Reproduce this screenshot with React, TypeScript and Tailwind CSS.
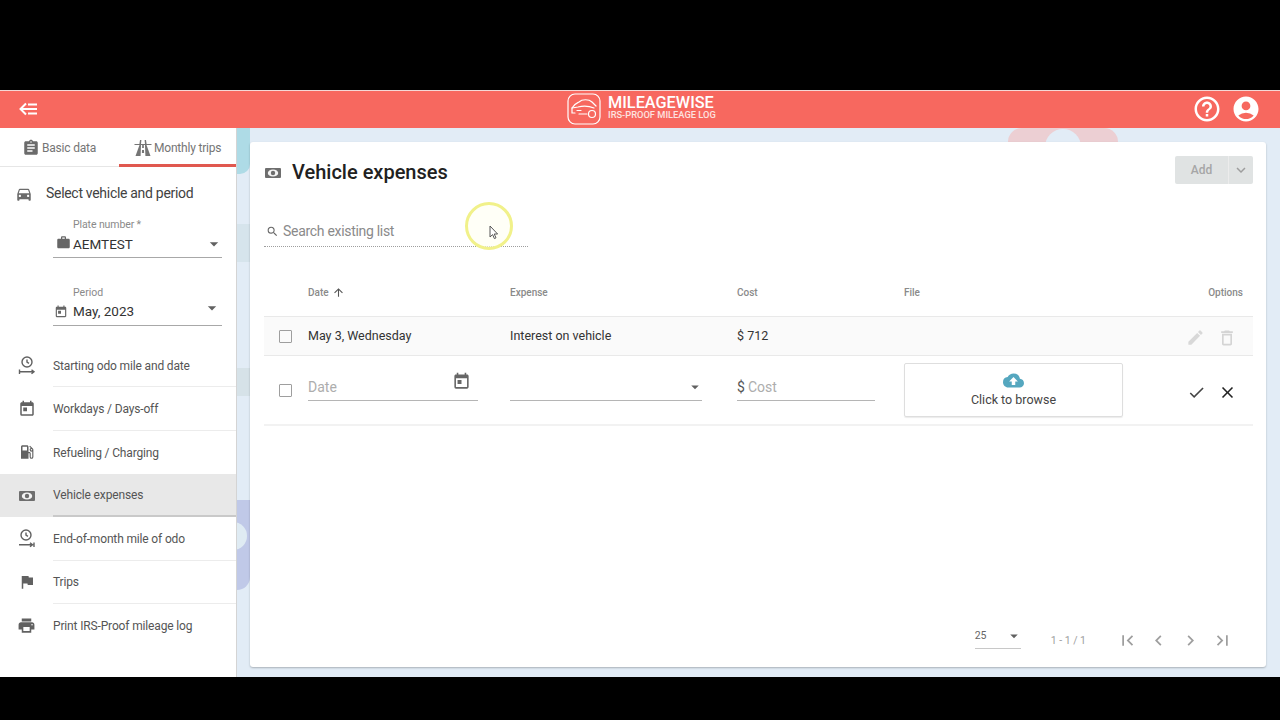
import React from "react";
import {
  MdAssignment, MdDirectionsCar, MdWork, MdToday, MdLocalGasStation, MdFlag, MdPrint,
  MdCloudUpload, MdCheck, MdClose, MdEdit, MdDeleteOutline, MdFirstPage, MdLastPage, MdChevronLeft, MdChevronRight,
  MdSearch, MdArrowUpward, MdHelpOutline, MdAccountCircle, MdArrowDropDown, MdKeyboardArrowDown,
} from "react-icons/md";

const Road = () => (
  <svg width="18" height="18" viewBox="0 0 18 18" fill="#757575">
    <path d="M5.5 6 L7 6 L6.6 17 L1.5 17 Z M11 6 L12.5 6 L16.5 17 L11.4 17 Z M8.2 6 L9.8 6 L9.9 9 L8.1 9 Z M8 11 L10 11 L10.1 14 L7.9 14 Z" />
    <path d="M0.5 5 L17.5 5 L17.5 6 L0.5 6 Z M6 1 L7.4 1 L7 5 L5.4 5 Z M10.6 1 L12 1 L12.6 5 L11 5 Z" />
  </svg>
);

const ClockStart = () => (
  <svg width="18" height="20" viewBox="0 0 18 20" fill="none" stroke="#616161" strokeWidth="1.4">
    <circle cx="9" cy="6" r="5" />
    <path d="M9 3.5 V6.2 L11 7.3" />
    <path d="M1.5 13.5 V18 M1.5 15.8 H16 M13.5 13.8 L16 15.8 L13.5 17.8" />
  </svg>
);

const ClockEnd = () => (
  <svg width="18" height="20" viewBox="0 0 18 20" fill="none" stroke="#616161" strokeWidth="1.4">
    <circle cx="8" cy="6" r="5" />
    <path d="M8 3.5 V6.2 L10 7.3" />
    <path d="M16 13.5 V18 M1 15.8 H14.5 M12 13.8 L14.5 15.8 L12 17.8" />
  </svg>
);

const Money = ({ className = "" }: { className?: string }) => (
  <svg className={className} width="16" height="12" viewBox="0 0 16 12">
    <rect x="0" y="1" width="16" height="10" rx="1" fill="#6e6e6e" />
    <ellipse cx="8" cy="6" rx="5.2" ry="3.6" fill="#f4f4f4" />
    <circle cx="8" cy="6" r="2.2" fill="#6e6e6e" />
  </svg>
);

const Logo = () => (
  <svg width="34" height="32" viewBox="0 0 34 32" fill="none" stroke="#fff" strokeWidth="1.2" strokeLinecap="round">
    <rect x="1" y="1" width="32" height="30" rx="7" />
    <path d="M5 15 C7 11 10 10 12 9 C15 6 22 6 25 9 L29 13" />
    <path d="M5 15 V20 H8 M5 15 L11 14 C15 13 22 13 27 15" />
    <path d="M10 17.5 H14 M12 21 H20" />
    <circle cx="25" cy="21" r="3.5" />
  </svg>
);

const navItems = [
  { icon: <ClockStart />, label: "Starting odo mile and date" },
  { icon: <MdToday size={18} color="#616161" />, label: "Workdays / Days-off" },
  { icon: <MdLocalGasStation size={18} color="#616161" />, label: "Refueling / Charging" },
  { icon: <Money />, label: "Vehicle expenses", active: true },
  { icon: <ClockEnd />, label: "End-of-month mile of odo" },
  { icon: <MdFlag size={18} color="#616161" />, label: "Trips" },
  { icon: <MdPrint size={19} color="#616161" />, label: "Print IRS-Proof mileage log" },
];

const Checkbox = () => <div className="h-[13px] w-[13px] rounded-[1px] border border-[#9e9e9e]" />;

const rowCols = "grid grid-cols-[44px_202px_227px_167px_1fr]";

export default function App() {
  return (
    <div className="flex h-[720px] w-[1280px] flex-col overflow-hidden bg-black font-['Roboto',sans-serif]">
      <div className="h-[90px] shrink-0" />
      <header className="relative flex h-[38px] shrink-0 items-center justify-between border-t border-[#f4d9d6] bg-[#f7685f] pb-[2px] pl-[19px] pr-[19px] text-white">
        <svg width="19" height="14" viewBox="0 0 19 14" fill="none" stroke="#fff" strokeWidth="2">
          <path d="M7 1.5 L1.5 7 L7 12.5 M2 7 H18 M9 2.5 H18 M9 11.5 H18" />
        </svg>
        <div className="absolute left-[567px] top-[-1px] flex h-[37px] items-center gap-[7px]">
          <Logo />
          <div className="mb-[2px] flex flex-col">
            <span className="text-[16.3px] font-medium leading-[14px]">MILEAGEWISE</span>
            <span className="text-[9.3px] font-medium leading-[10px] text-[#fde3e0]">IRS-PROOF MILEAGE LOG</span>
          </div>
        </div>
        <div className="flex items-center gap-[9px]">
          <MdHelpOutline size={30} />
          <MdAccountCircle size={30} />
        </div>
      </header>

      <div className="relative flex h-[549px] shrink-0 bg-[#e2ecf6]">
        <div className="absolute left-[237px] top-0 h-[46px] w-[13px] rounded-br-[10px] bg-[#aedbe6]" />
        <div className="absolute left-[237px] top-[96px] h-[38px] w-[13px] bg-[#d6e4ec]" />
        <div className="absolute left-[237px] top-[240px] h-[28px] w-[13px] bg-[#d6e2e8]" />
        <div className="absolute left-[237px] top-[372px] h-[90px] w-[13px] rounded-br-[14px] bg-[#c0c9e8]" />
        <div className="absolute left-[219px] top-[394px] h-[28px] w-[28px] rounded-full bg-[#dfebf3]" />
        <div className="absolute left-[1008px] top-0 h-[14px] w-[110px] rounded-t-[14px] bg-[#eccfd3]" />
        <div className="absolute left-[1045px] top-[1px] h-[40px] w-[36px] rounded-full bg-[#e2ecf6]" />

        <aside className="relative z-10 flex w-[237px] shrink-0 flex-col border-r border-[#d4d4d4] bg-white">
          <div className="flex h-[39px] shrink-0 border-b border-[#e6e6e6] text-[12px] tracking-[-0.2px] text-[#757575]">
            <div className="flex w-[119px] items-center gap-[2px] pl-[22px] pt-[2px]">
              <MdAssignment size={18} color="#6b6b6b" />
              <span>Basic data</span>
            </div>
            <div className="-mb-px flex flex-1 items-center gap-[2px] border-b-[3px] border-[#e0584f] pl-[15px] pt-[4px]">
              <Road />
              <span>Monthly trips</span>
            </div>
          </div>

          <div className="flex h-[52px] shrink-0 items-center gap-[13px] pl-[15px] pt-[1px] text-[14px] text-[#424242]">
            <MdDirectionsCar size={18} color="#6b6b6b" />
            <span className="tracking-[-0.3px]">Select vehicle and period</span>
          </div>

          <div className="ml-[53px] mr-[14px] h-[67px] shrink-0">
            <div className="pl-[20px] text-[10.5px] leading-[12px] tracking-[-0.1px] text-[#8a8a8a]">Plate number *</div>
            <div className="flex h-[27px] items-center border-b border-[#a8a8a8]">
              <MdWork size={15} color="#666" className="-mt-[3px] ml-[3px] mr-[2px]" />
              <span className="text-[13.5px] text-[#333]">AEMTEST</span>
              <MdArrowDropDown size={20} color="#616161" className="-mr-[2px] ml-auto" />
            </div>
          </div>

          <div className="ml-[53px] mr-[14px] h-[58px] shrink-0 pt-[1px]">
            <div className="pl-[20px] text-[10.5px] leading-[12px] text-[#8a8a8a]">Period</div>
            <div className="flex h-[27px] items-center border-b border-[#a8a8a8] pb-[1px]">
              <MdToday size={14} color="#666" className="ml-[1px] mr-[5px]" />
              <span className="text-[13.5px] text-[#333]">May, 2023</span>
              <MdArrowDropDown size={20} color="#616161" className="-mt-[8px] ml-auto" />
            </div>
          </div>

          <nav className="flex flex-col">
            {navItems.map((it) => (
              <div key={it.label} className={`flex h-[43.33px] items-stretch ${it.active ? "bg-[#e8e8e8]" : ""}`}>
                <div className="flex w-[53px] shrink-0 items-center justify-center">{it.icon}</div>
                <div
                  className={`flex flex-1 items-center pt-[1px] text-[12px] tracking-[-0.15px] text-[#555] ${
                    it.active ? "border-b-2 border-[#c9c9c9]" : it.label.startsWith("Refueling") || it.label.startsWith("Print") ? "" : "border-b border-[#ececec]"
                  }`}
                >
                  {it.label}
                </div>
              </div>
            ))}
          </nav>
        </aside>

        <main className="relative z-10 mb-[10px] ml-[13px] mr-[14px] mt-[14px] flex flex-1 flex-col rounded-[3px] bg-white pl-[14px] pr-[13px] shadow-[0_1px_2px_rgba(0,0,0,0.25)]">
          <div className="flex h-[49px] shrink-0 items-start pt-[13px]">
            <div className="flex h-[34px] items-center gap-[11px] pl-[1px]">
              <Money className="mt-[2px]" />
              <h1 className="text-[20px] font-medium text-[#212121]">Vehicle expenses</h1>
            </div>
            <div className="ml-auto mt-[1px] flex h-[28px] w-[78px] overflow-hidden rounded-[2px] bg-[#e0e3e3] text-[12px] text-[#a6a6a6]">
              <div className="flex w-[53px] items-center justify-center font-medium">Add</div>
              <div className="flex flex-1 items-center justify-center border-l border-[#ececec]">
                <MdKeyboardArrowDown size={18} color="#9e9e9e" />
              </div>
            </div>
          </div>

          <div className="flex h-[56px] w-[264px] shrink-0 items-center gap-[4px] border-b border-dotted border-[#9e9e9e] pl-[2px] pt-[25px] text-[14px] text-[#8a8a8a]">
            <MdSearch size={13} color="#666" />
            <span className="tracking-[-0.3px]">Search existing list</span>
          </div>

          <div className={`${rowCols} mt-[30px] h-[39px] shrink-0 items-center pb-[9px] text-[10px] font-medium text-[#8a8a8a]`}>
            <div />
            <div className="flex items-center gap-[3px]">
              Date <MdArrowUpward size={13} color="#555" />
            </div>
            <div>Expense</div>
            <div>Cost</div>
            <div className="flex justify-between pr-[10px]">
              <span>File</span>
              <span>Options</span>
            </div>
          </div>

          <div className={`${rowCols} h-[40px] shrink-0 items-center border-y border-[#e9e9e9] bg-[#fafafa] text-[12.5px] text-[#333]`}>
            <div className="flex justify-center pr-[1px] pt-[1px]"><Checkbox /></div>
            <div>May 3, Wednesday</div>
            <div>Interest on vehicle</div>
            <div>$ 712</div>
            <div className="flex justify-end gap-[13px] pr-[16px] pt-[3px]">
              <MdEdit size={19} color="#d8d8d8" className="translate-x-[1px]" />
              <MdDeleteOutline size={20} color="#d4d4d4" />
            </div>
          </div>

          <div className={`${rowCols} h-[70px] shrink-0 border-b-2 border-[#f2f2f2]`}>
            <div className="flex justify-center pr-[1px] pt-[28px]"><Checkbox /></div>
            <div className="pr-[32px] pt-[9px]">
              <div className="flex h-[36px] items-center justify-between border-b border-[#b5b5b5] text-[14px] text-[#adadad]">
                <span className="pt-[9px]">Date</span>
                <MdToday size={19} color="#666" className="-mt-[3px] mr-[7px]" />
              </div>
            </div>
            <div className="pr-[35px] pt-[9px]">
              <div className="flex h-[36px] items-center justify-end border-b border-[#b5b5b5] pt-[8px]">
                <MdArrowDropDown size={18} color="#616161" className="translate-x-[2px]" />
              </div>
            </div>
            <div className="pr-[29px] pt-[9px]">
              <div className="flex h-[36px] items-end gap-[3px] border-b border-[#b5b5b5] pb-[5px] text-[14px] leading-[16px]">
                <span className="text-[#555]">$</span>
                <span className="text-[#adadad]">Cost</span>
              </div>
            </div>
            <div className="flex items-start">
              <div className="mt-[7px] flex h-[54px] w-[219px] flex-col items-center justify-center rounded-[2px] border border-[#dedede] pb-[4px] text-[12.5px] leading-[15px] text-[#444] shadow-[0_1px_1px_rgba(0,0,0,0.08)]">
                <MdCloudUpload size={21} color="#55a7bf" className="mb-[1px]" />
                <span>Click to browse</span>
              </div>
              <div className="ml-auto flex items-center gap-[12px] pr-[16px] pt-[27px]">
                <MdCheck size={19} color="#444" />
                <MdClose size={19} color="#222" />
              </div>
            </div>
          </div>

          <div className="mt-auto flex h-[62px] shrink-0 items-start justify-end pr-[20px] pt-[21px]">
            <div className="mt-[1px] flex h-[22px] w-[46px] items-center justify-between border-b border-[#c8c8c8] pb-[4px] text-[10.5px] text-[#666]">
              <span>25</span>
              <MdArrowDropDown size={18} color="#616161" className="-mr-[2px]" />
            </div>
            <div className="ml-[30px] mt-[7px] text-[10.5px] text-[#9e9e9e]">1 - 1 / 1</div>
            <div className="ml-[30px] mt-[4px] flex gap-[11px]">
              <MdFirstPage size={21} color="#9e9e9e" className="translate-x-[1px]" />
              <MdChevronLeft size={21} color="#9e9e9e" />
              <MdChevronRight size={21} color="#9e9e9e" />
              <MdLastPage size={21} color="#9e9e9e" />
            </div>
          </div>

          <div className="pointer-events-none absolute left-[215px] top-[60px] h-[48px] w-[48px] rounded-full border-[3px] border-[#f1f18a] bg-[#fffff2]/60">
            <svg className="absolute left-[21px] top-[20px]" width="10" height="15" viewBox="0 0 10 15">
              <path d="M1 1 V12 L3.6 9.6 L5.4 13.6 L7 12.8 L5.2 9 L8.6 9 Z" fill="#fff" stroke="#555" strokeWidth="1" />
            </svg>
          </div>
        </main>
      </div>
    </div>
  );
}
